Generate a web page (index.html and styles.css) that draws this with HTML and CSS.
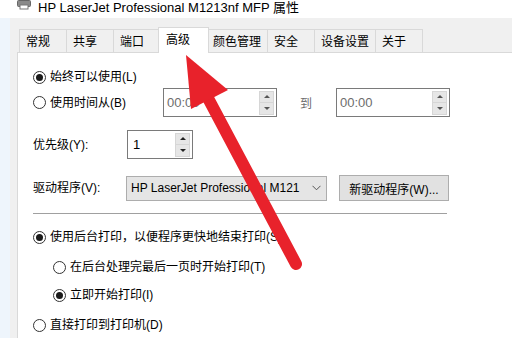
FILE: index.html
```html
<!DOCTYPE html>
<html lang="zh-CN">
<head>
<meta charset="utf-8">
<title>HP LaserJet Professional M1213nf MFP 属性</title>
<link rel="stylesheet" href="styles.css">
</head>
<body>
<div class="win">
  <div class="titlebar">
    <svg class="ticon" width="14" height="12" viewBox="0 0 14 12">
      <rect x="3" y="-3" width="8" height="5" fill="#fff" stroke="#777"/>
      <rect x="0.5" y="2.5" width="13" height="6" rx="1" fill="#8a8a8a" stroke="#666"/>
      <rect x="3" y="7" width="8" height="4" fill="#fff" stroke="#777"/>
    </svg>
    <span class="ttext">HP LaserJet Professional M1213nf MFP 属性</span>
  </div>
  <div class="frame">
    <div class="tabs">
      <div class="tab">常规</div>
      <div class="tab">共享</div>
      <div class="tab">端口</div>
      <div class="tab sel">高级</div>
      <div class="tab">颜色管理</div>
      <div class="tab">安全</div>
      <div class="tab">设备设置</div>
      <div class="tab">关于</div>
    </div>
    <div class="panel">
      <div class="row r1">
        <span class="radio on"></span><span class="lbl">始终可以使用(L)</span>
      </div>
      <div class="row r2">
        <div class="col1"><span class="radio"></span><span class="lbl">使用时间从(B)</span></div>
        <div class="spin time dis"><span class="val">00:00</span><span class="btns"><span class="b up"></span><span class="b dn"></span></span></div>
        <span class="to">到</span>
        <div class="spin time dis"><span class="val">00:00</span><span class="btns"><span class="b up"></span><span class="b dn"></span></span></div>
      </div>
      <div class="row r3">
        <span class="flbl w94">优先级(Y):</span>
        <div class="spin prio"><span class="val">1</span><span class="btns"><span class="b up"></span><span class="b dn"></span></span></div>
      </div>
      <div class="row r4">
        <span class="flbl w93">驱动程序(V):</span>
        <div class="combo"><span class="ctext">HP LaserJet Professional M121</span>
          <svg class="chev" width="9" height="6" viewBox="0 0 9 6"><path d="M0.5 0.8 L4.5 4.8 L8.5 0.8" fill="none" stroke="#555" stroke-width="1"/></svg>
        </div>
        <div class="btn">新驱动程序(W)...</div>
      </div>
      <div class="sep"></div>
      <div class="row rr m13">
        <span class="radio on"></span><span class="lbl">使用后台打印，以便程序更快地结束打印(S)</span>
      </div>
      <div class="row rr sub m10">
        <span class="radio"></span><span class="lbl">在后台处理完最后一页时开始打印(T)</span>
      </div>
      <div class="row rr sub m8">
        <span class="radio on"></span><span class="lbl">立即开始打印(I)</span>
      </div>
      <div class="row rr m10">
        <span class="radio"></span><span class="lbl">直接打印到打印机(D)</span>
      </div>
    </div>
  </div>
  <svg class="arrow" width="517" height="338" viewBox="0 0 517 338">
    <line x1="209" y1="100" x2="296" y2="264" stroke="#e8222b" stroke-width="12" stroke-linecap="round"/>
    <polygon points="186,55 228,90 191,109" fill="#e8222b"/>
  </svg>
</div>
</body>
</html>
```
FILE: styles.css
```css
html, body {
  margin: 0;
  padding: 0;
  background: #fff;
}
body {
  font-family: "Liberation Sans", "Noto Sans CJK SC", sans-serif;
  font-size: 12px;
  color: #000;
  width: 517px;
  height: 338px;
  overflow: hidden;
}
.win {
  position: relative;
  width: 517px;
  height: 338px;
  overflow: hidden;
}
.titlebar {
  height: 18px;
  display: flex;
  align-items: flex-start;
  background: #fff;
  padding-left: 17px;
}
.ticon {
  margin-top: -2px;
  margin-right: 7px;
}
.ttext {
  font-size: 13px;
  line-height: 16px;
  color: #000;
  white-space: nowrap;
}
.frame {
  width: 495px;
  height: 320px;
  background: #f0f0f0;
  border-left: 10px solid #eef5fc;
  padding-left: 7px;
}
.tabs {
  display: flex;
  padding-left: 2px;
  padding-top: 11px;
  height: 23px;
  align-items: flex-end;
}
.tab {
  height: 23px;
  box-sizing: border-box;
  min-width: 48px;
  padding: 0 6px;
  border: 1px solid #d9d9d9;
  border-bottom: none;
  margin-right: -1px;
  line-height: 21px;
  font-family: "Noto Sans CJK SC", sans-serif;
  background: #f0f0f0;
  white-space: nowrap;
}
.tab.sel {
  height: 26px;
  min-width: 51px;
  margin-left: -2px;
  margin-right: -3px;
  margin-bottom: -1px;
  background: #fff;
  position: relative;
  z-index: 2;
  line-height: 22px;
  padding-left: 7px;
}
.panel {
  background: #fff;
  border-top: 1px solid #d9d9d9;
  border-left: 1px solid #d9d9d9;
  height: 300px;
  padding-left: 15px;
  padding-top: 14px;
  box-sizing: border-box;
}
.row {
  display: flex;
  align-items: center;
}
.r1 { height: 20px; }
.r2 { height: 29px; margin-top: 1px; }
.r3 { height: 29px; margin-top: 13px; }
.r4 { height: 26px; margin-top: 16px; }
.rr { height: 20px; }
.m13 { margin-top: 13px; }
.m10 { margin-top: 10px; }
.m8 { margin-top: 8px; }
.sub { padding-left: 20px; }
.col1 {
  width: 130px;
  display: flex;
  align-items: center;
}
.radio {
  width: 13px;
  height: 13px;
  box-sizing: border-box;
  border: 1px solid #333;
  border-radius: 50%;
  background: #fff;
  display: inline-flex;
  align-items: center;
  justify-content: center;
  flex: none;
}
.radio.on::after {
  content: "";
  width: 7px;
  height: 7px;
  border-radius: 50%;
  background: #1a1a1a;
}
.lbl {
  margin-left: 4px;
  line-height: 16px;
  white-space: nowrap;
}
.flbl {
  line-height: 16px;
  white-space: nowrap;
}
.w94 { width: 94px; }
.w93 { width: 93px; }
.spin {
  height: 29px;
  box-sizing: border-box;
  border: 1px solid #7a7a7a;
  background: #fff;
  display: flex;
  align-items: center;
  justify-content: space-between;
  padding: 0 2px 0 3px;
}
.spin.time { width: 114px; }
.spin.prio { width: 66px; padding-left: 5px; }
.spin.dis { border-color: #7a7a7a; }
.val {
  font-size: 13px;
  line-height: 16px;
}
.dis .val { color: #6d6d6d; }
.btns {
  display: flex;
  flex-direction: column;
  width: 15px;
  height: 24px;
}
.b {
  flex: 1;
  background: #e6e6e6;
  border: 1px solid #d6d6d6;
  display: flex;
  align-items: center;
  justify-content: center;
}
.b.dn { border-top: none; }
.b.up::after {
  content: "";
  border-left: 3px solid transparent;
  border-right: 3px solid transparent;
  border-bottom: 3px solid #222;
}
.b.dn::after {
  content: "";
  border-left: 3px solid transparent;
  border-right: 3px solid transparent;
  border-top: 3px solid #222;
}
.dis .b.up::after { border-bottom-color: #555; }
.dis .b.dn::after { border-top-color: #555; }
.to {
  color: #6d6d6d;
  margin-left: 23px;
  margin-right: 24px;
  font-family: "Noto Sans CJK SC", sans-serif;
}
.combo {
  width: 201px;
  height: 25px;
  box-sizing: border-box;
  border: 1px solid #adadad;
  background: #e5e5e5;
  display: flex;
  align-items: center;
  justify-content: space-between;
  padding: 0 5px 0 4px;
}
.ctext {
  line-height: 16px;
  white-space: nowrap;
  overflow: hidden;
}
.chev { flex: none; }
.btn {
  margin-left: 12px;
  width: 110px;
  height: 26px;
  box-sizing: border-box;
  border: 1px solid #adadad;
  background: #e1e1e1;
  display: flex;
  align-items: center;
  justify-content: center;
  white-space: nowrap;
}
.sep {
  width: 414px;
  height: 1px;
  background: #a0a0a0;
  margin-top: 12px;
}
.arrow {
  position: absolute;
  left: 0;
  top: 0;
  pointer-events: none;
}
```
